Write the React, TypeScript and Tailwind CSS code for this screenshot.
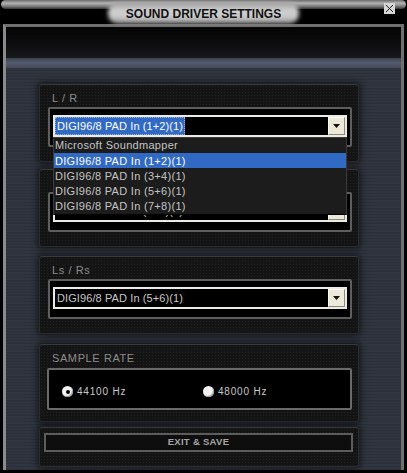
import type { ReactNode } from "react";

const font = "font-['Liberation_Sans',Arial,sans-serif]";

const Arrow = (): ReactNode => (
  <svg width="9" height="5" viewBox="0 0 9 5">
    <path d="M1 0h7L4.5 4z" fill="#111" />
  </svg>
);

const Select = ({ value, focused }: { value: string; focused?: boolean }): ReactNode => (
  <div className="flex h-[22px] items-center border-2 border-[#ecebe3] bg-black">
    <div className="flex min-w-0 flex-1 items-center overflow-hidden">
      <span
        className={
          focused
            ? "border border-dotted border-[#9fb6e0] bg-[#316ac5] px-[1px] text-[11px] leading-[16px] tracking-[0.1px] text-white"
            : "px-[2px] text-[11px] leading-[16px] tracking-[0.1px] text-[#c8c8c8]"
        }
      >
        {value}
      </span>
    </div>
    <div className="flex h-[18px] w-[17px] items-center justify-center border border-[#fbfaf4] border-r-[#8c8a80] border-b-[#8c8a80] bg-[#ece9d8]">
      <Arrow />
    </div>
  </div>
);

const Panel = ({ label, children, className }: { label?: string; children: ReactNode; className?: string }): ReactNode => (
  <div
    className={
      "rounded-[3px] border border-[#2c2c2c] border-t-[#3a3a3a] bg-[#141414] bg-[radial-gradient(#222_0.6px,transparent_0.8px)] bg-[length:3px_3px] shadow-[0_0_6px_2px_rgba(0,0,0,0.55)] " +
      (className ?? "")
    }
  >
    {label ? (
      <div className="h-[19px] pl-[12px] pt-[7px] text-[11px] leading-[12px] tracking-[0.6px] text-[#8c8c8c]">{label}</div>
    ) : (
      <div className="h-[19px]" />
    )}
    {children}
  </div>
);

const SelectPanel = ({ label, value, focused }: { label?: string; value: string; focused?: boolean }): ReactNode => (
  <Panel label={label} className="h-[78px]">
    <div className="ml-[8px] mr-[6px] mt-[3px] h-[40px] rounded-[2px] border-2 border-[#5e5e5e] bg-black px-[3px] pt-[6px]">
      <Select value={value} focused={focused} />
    </div>
  </Panel>
);

const Radio = ({ checked, label }: { checked?: boolean; label: string }): ReactNode => (
  <div className="flex items-center gap-[4px]">
    <div className="flex h-[11px] w-[11px] items-center justify-center rounded-full bg-[#f4f4f4] shadow-[inset_-1px_-1px_1px_#9a9a9a]">
      {checked && <div className="h-[4px] w-[4px] rounded-full bg-black" />}
    </div>
    <span className="text-[10px] tracking-[0.8px] text-[#c8c8c8]">{label}</span>
  </div>
);

const items = [
  "Microsoft Soundmapper",
  "DIGI96/8 PAD In (1+2)(1)",
  "DIGI96/8 PAD In (3+4)(1)",
  "DIGI96/8 PAD In (5+6)(1)",
  "DIGI96/8 PAD In (7+8)(1)",
];

const App = (): ReactNode => {
  return (
    <div className={"relative h-[473px] w-[407px] overflow-hidden bg-black " + font}>
      {/* title bar */}
      <div className="relative h-[24px]">
        <div className="mx-[1px] h-[9px] rounded-full bg-[linear-gradient(180deg,#6a6a6a,#b4b4b4_35%,#7a7a7a_70%,#333)]" />
        <div className="absolute left-[108px] top-[2px] h-[22px] w-[191px] rounded-[10px] bg-[linear-gradient(180deg,#9a9a9a,#d2d2d2_40%,#c4c4c4_75%,#7c7c7c)] blur-[2px]" />
        <div className="absolute left-[108px] top-[4px] flex h-[20px] w-[191px] items-center justify-center text-[12px] font-bold text-[#111]">
          SOUND DRIVER SETTINGS
        </div>
        <div className="absolute left-[384px] top-[3px] flex h-[11px] w-[11px] items-center justify-center bg-[#d6d6d6]">
          <svg width="9" height="9" viewBox="0 0 9 9">
            <path d="M1 1l7 7M8 1L1 8" stroke="#222" strokeWidth="1" />
          </svg>
        </div>
      </div>

      {/* frame */}
      <div className="mx-[3px] flex h-[446px] flex-col border-[3px] border-b-0 border-[#6f6f6f] border-l-[#8a8a8a]">
        <div className="h-[31px] bg-[linear-gradient(180deg,#050505,#0c0c0e_50%,#18191c)]" />
        <div className="h-[10px] bg-[linear-gradient(180deg,#3c4250,#545b6c_50%,#434958)]" />
        <div className="flex flex-1 flex-col bg-[#2c313c] bg-[repeating-linear-gradient(0deg,#2a2f39_0px,#2a2f39_1px,#30353f_1px,#30353f_3px)] pl-[33px] pr-[42px] pt-[16px]">
          <div className="relative flex flex-col">
            <SelectPanel label="L / R" value="DIGI96/8 PAD In (1+2)(1)" focused />
            <div className="h-[7px]" />
            <SelectPanel value="DIGI96/8 PAD In (3+4)(1)" />
            <div className="h-[9px]" />
            <SelectPanel label="Ls / Rs" value="DIGI96/8 PAD In (5+6)(1)" />
            <div className="h-[10px]" />
            <Panel label="SAMPLE RATE" className="h-[78px]">
              <div className="ml-[7px] mr-[6px] mt-[4px] flex h-[42px] items-center rounded-[2px] border-2 border-[#6a6a6a] bg-black pl-[13px] pt-[5px]">
                <div className="w-[141px]">
                  <Radio checked label="44100 Hz" />
                </div>
                <Radio label="48000 Hz" />
              </div>
            </Panel>
            <div className="h-[5px]" />
            <Panel className="h-[40px]">
              <div className="-mt-[14px] ml-[4px] mr-[5px] flex h-[19px] items-center justify-center border-2 border-[#5c5c5c] bg-[#0e0e0e] text-[9.5px] font-bold tracking-[0.3px] text-[#a6a6a6]">
                EXIT &amp; SAVE
              </div>
            </Panel>

            {/* open dropdown list */}
            <div className="absolute left-[14px] top-[53px] w-[294px] border border-[#3a3a3a] border-b-black bg-[#1c1c1c]">
              {items.map((item, i) => (
                <div
                  key={item}
                  className={
                    "flex h-[15.2px] items-center pl-[1px] text-[11px] tracking-[0.3px] " +
                    (i === 1 ? "bg-[#316ac5] text-white" : "text-[#c4c4c4]")
                  }
                >
                  {item}
                </div>
              ))}
            </div>
          </div>
        </div>
      </div>
    </div>
  );
};

export default App;
